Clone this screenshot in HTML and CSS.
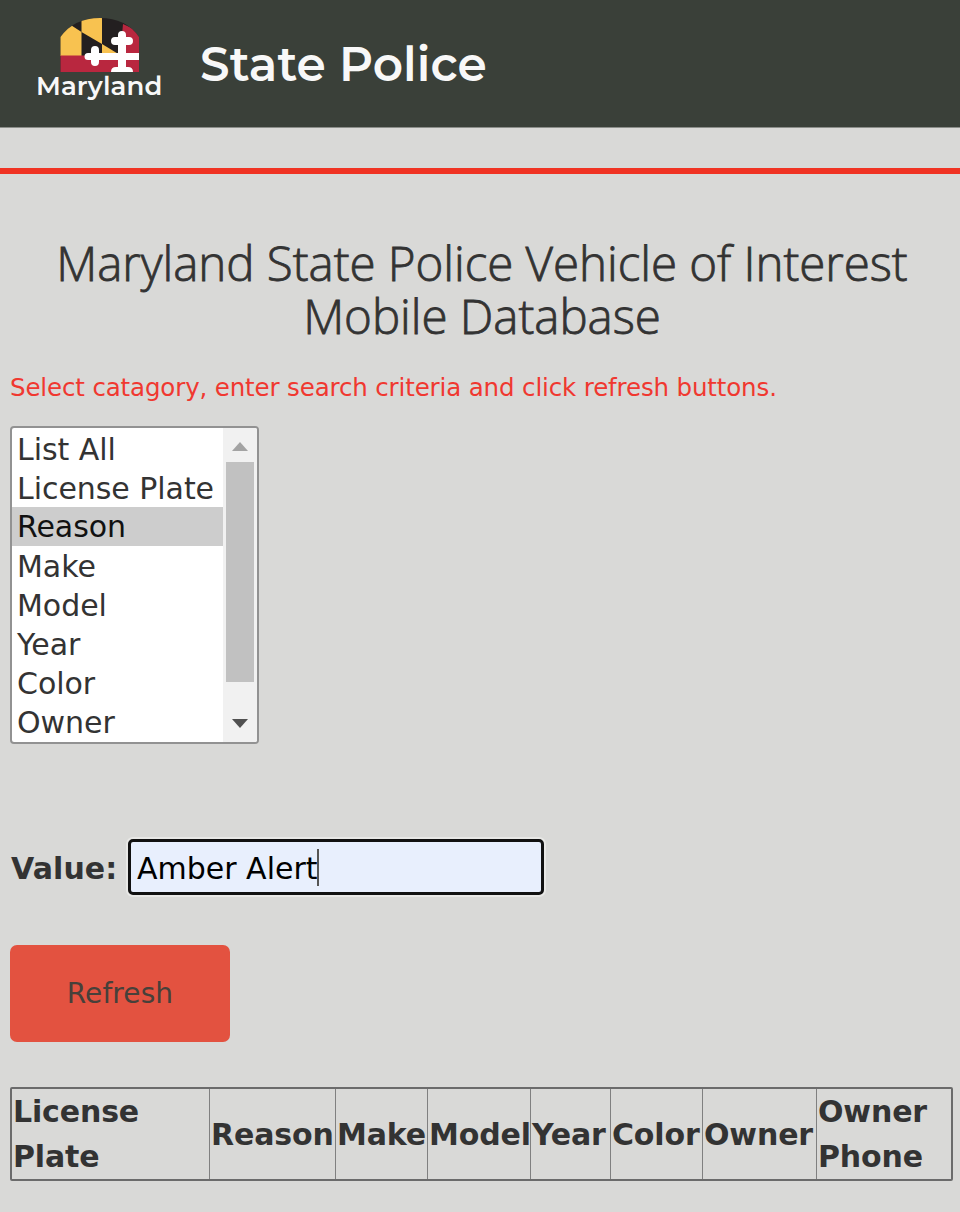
FILE: index.html
```html
<!DOCTYPE html>
<html lang="en">
<head>
<meta charset="utf-8">
<title>Maryland State Police</title>
<link rel="stylesheet" href="styles.css">
</head>
<body>
<header class="banner">
  <div class="logo">
    <svg class="logo-mark" width="80" height="56" viewBox="0 0 80 56">
      <defs><clipPath id="dome"><path d="M0.500 19 Q14 0 40 0 Q66 0 79 19 V54 H0.500Z"/></clipPath></defs>
      <g clip-path="url(#dome)">
        <rect width="80" height="56" fill="#231f20"/>
        <path d="M0 0 L21.500 14 V38 H0Z" fill="#f8c250"/>
        <path d="M21.500 0 H42 V26 L21.500 14Z" fill="#f8c250"/>
        <path d="M42 26 L60 37 H42Z" fill="#f8c250"/>
        <path d="M0 37.500 H60 L63 6 L80 14 V56 H0Z" fill="#b9273f"/>
      </g>
      <path fill="#fff" d="M58 19V17a4 4 0 0 1 8 0v2h3a4 4 0 0 1 0 8h-3v8h13v7H66v7h2q5 0 5 5H51q0-5 5-5h2v-7H39v2a4 4 0 0 1-8 0v-2h-3a3.500 3.500 0 0 1 0-7h3v-3a4 4 0 0 1 8 0v3h19v-8h-3a4 4 0 0 1 0-8z"/>
    </svg>
    <span class="logo-name">Maryland</span>
  </div>
  <span class="agency">State Police</span>
</header>
<div class="rule"></div>
<main class="content">
  <h1 class="title">Maryland State Police Vehicle of Interest Mobile Database</h1>
  <p class="hint">Select catagory, enter search criteria and click refresh buttons.</p>
  <div class="listbox">
    <ul class="options">
      <li>List All</li><li>License Plate</li><li class="selected">Reason</li><li>Make</li><li>Model</li><li>Year</li><li>Color</li><li>Owner</li>
    </ul>
    <div class="scrollbar">
      <svg class="arrow" width="16" height="9" viewBox="0 0 16 9"><path d="M0 9 8 0l8 9z" fill="#a3a3a3"/></svg>
      <div class="track"><div class="thumb"></div></div>
      <svg class="arrow" width="16" height="9" viewBox="0 0 16 9"><path d="M0 0h16L8 9z" fill="#505050"/></svg>
    </div>
  </div>
  <div class="field">
    <span class="label">Value:</span>
    <div class="input"><span class="typed">Amber Alert</span><span class="caret"></span></div>
  </div>
  <button class="refresh">Refresh</button>
  <table class="results">
    <colgroup><col class="c1"><col class="c2"><col class="c3"><col class="c4"><col class="c5"><col class="c6"><col class="c7"><col class="c8"></colgroup>
    <tr><th>License<br>Plate</th><th>Reason</th><th>Make</th><th>Model</th><th>Year</th><th>Color</th><th>Owner</th><th>Owner<br>Phone</th></tr>
  </table>
</main>
</body>
</html>
```
FILE: styles.css
```css
* { box-sizing: border-box; }
body {
  margin: 0;
  height: 1212px;
  overflow: hidden;
  background: #d9d9d7;
  color: #333;
  font-family: Verdana, "DejaVu Sans", sans-serif;
}
.banner {
  display: flex;
  height: 128px;
  padding-left: 36px;
  background: #3a4039;
  border-bottom: 1px solid #8b8e8a;
  color: #f8f8f8;
  font-family: Montserrat, Inter, sans-serif;
}
.logo { width: 164px; padding-top: 18px; }
.logo-mark { display: block; margin-left: 24px; }
.logo-name {
  display: block;
  margin-top: -4px;
  font-size: 26px;
  line-height: 32px;
  font-weight: 600;
  letter-spacing: 0.1px;
}
.agency { padding-top: 36px; font-size: 47px; line-height: 58px; font-weight: 600; letter-spacing: 0.1px; white-space: nowrap; }
.rule { height: 6px; margin-top: 40px; background: #f03323; }
.content { padding: 62px 6px 0 10px; }
.title {
  margin: 0;
  text-align: center;
  font: 300 47.5px/53px "Segoe UI", "Open Sans", "Noto Sans", sans-serif;
  letter-spacing: -0.05px;
  -webkit-text-stroke: 0.8px #333;
}
.hint {
  margin: 30px 0 0;
  color: #f03830;
  font-size: 24.5px;
  line-height: 32px;
  letter-spacing: -0.14px;
  white-space: nowrap;
}
.listbox {
  display: flex;
  width: 249px;
  height: 318px;
  margin-top: 22px;
  background: #fff;
  border: 2px solid #929292;
  border-radius: 4px;
  overflow: hidden;
}
.options { flex: 1; margin: 0; padding: 1px 0 0; list-style: none; font-size: 30px; line-height: 41px; letter-spacing: -0.05px; white-space: nowrap; }
.options li { height: 39px; padding-left: 5px; }
.options .selected { background: #cdcdcd; color: #111; line-height: 40px; }
.scrollbar {
  display: flex;
  flex-direction: column;
  align-items: center;
  width: 34px;
  padding: 14px 0;
  background: #f1f1f1;
}
.track { flex: 1; width: 28px; padding-top: 11px; }
.thumb { height: 220px; background: #c1c1c1; }
.field { display: flex; align-items: center; margin-top: 94px; height: 58px; }
.label { width: 118px; padding: 2px 0 0 1px; font-size: 30px; font-weight: 700; letter-spacing: 0.1px; white-space: nowrap; }
.input {
  display: flex;
  align-items: center;
  width: 416px;
  height: 56px;
  padding: 1px 0 0 6px;
  background: #e8effd;
  border: 3px solid #111;
  border-radius: 5px;
  box-shadow: 0 0 0 2px #e8e8e6;
  color: #000;
  font-size: 30px;
  white-space: nowrap;
}
.typed { padding-top: 2px; }
.caret { width: 2px; height: 37px; margin-left: -1px; background: #555; }
.refresh {
  display: block;
  width: 220px;
  height: 97px;
  margin-top: 49px;
  padding: 0;
  border: 0;
  border-radius: 7px;
  background: #e35240;
  color: #47403a;
  font: 28px "Verdana", "DejaVu Sans", sans-serif;
  letter-spacing: 0.1px;
}
.results {
  width: 943px;
  height: 93px;
  margin-top: 45px;
  table-layout: fixed;
  border-collapse: separate;
  border-spacing: 0;
  border: 2px solid #6b6b6b;
  border-radius: 2px;
  font-size: 30px;
  line-height: 45px;
  letter-spacing: -0.15px;
}
.results th { padding: 0 0 0 1px; border-left: 1px solid #808080; text-align: left; white-space: nowrap; }
.results th:first-child { border-left: 0; }
.c1 { width: 197px; }
.c2 { width: 126px; }
.c3 { width: 92px; }
.c4 { width: 103px; }
.c5 { width: 80px; }
.c6 { width: 92px; }
.c7 { width: 114px; }
.c8 { width: 135px; }
```
